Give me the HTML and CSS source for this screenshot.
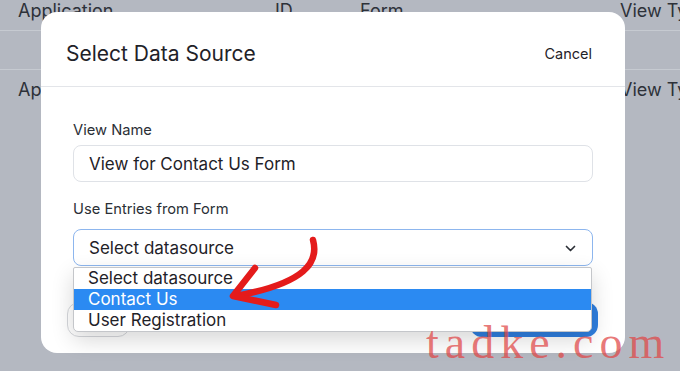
FILE: index.html
```html
<!DOCTYPE html>
<html lang="en">
<head>
    <meta charset="UTF-8">
    <meta name="viewport" content="width=device-width, initial-scale=1.0">
    <title>Select Data Source</title>
    <link rel="stylesheet" href="styles.css">
</head>
<body>
    <!-- Tabel di belakang modal -->
    <div class="table">
        <div class="row head">
            <span>Application</span>
            <span>ID</span>
            <span>Form</span>
            <span>View Type</span>
        </div>
        <div class="row empty"></div>
        <div class="row">
            <span>Application</span>
            <span></span>
            <span></span>
            <span>View Type</span>
        </div>
    </div>

    <!-- Modal -->
    <div class="modal">
        <div class="modal-head">
            <h2>Select Data Source</h2>
            <button class="cancel">Cancel</button>
        </div>
        <div class="modal-body">
            <label for="view-name">View Name</label>
            <input type="text" id="view-name" value="View for Contact Us Form">
            <label>Use Entries from Form</label>
            <div class="select-wrap">
                <div class="select">
                    <span>Select datasource</span>
                    <svg class="chevron" width="11" height="7" viewBox="0 0 11 7">
                        <path d="M1.5 1.5 L5.5 5.5 L9.5 1.5" fill="none" stroke="#2b2f36" stroke-width="1.7" stroke-linecap="round" stroke-linejoin="round"/>
                    </svg>
                </div>
                <ul class="options">
                    <li>Select datasource</li>
                    <li class="active">Contact Us</li>
                    <li>User Registration</li>
                </ul>
            </div>
        </div>
        <div class="modal-foot">
            <button class="btn-back">Back</button>
            <button class="btn-next">Next</button>
        </div>
    </div>

    <!-- Panah merah -->
    <svg class="arrow" width="680" height="371" viewBox="0 0 680 371">
        <path d="M313 240 C319 262 306 283 236 296" fill="none" stroke="#e41b1b" stroke-width="6.5" stroke-linecap="round"/>
        <path d="M255 268 L233 296 L276 305" fill="none" stroke="#e41b1b" stroke-width="6.5" stroke-linecap="round" stroke-linejoin="round"/>
    </svg>

    <div class="watermark">tadke.com</div>
</body>
</html>
```

FILE: styles.css
```css
body {
    margin: 0;
    width: 680px;
    height: 371px;
    overflow: hidden;
    background-color: #b4b8c1;
    font-family: Inter, "Noto Sans", sans-serif;
    color: #23262d;
}
.table {
    color: #2d3139;
    font-size: 18px;
}
.row {
    display: grid;
    grid-template-columns: 257px 85px 260px 1fr;
    padding-left: 18px;
    line-height: 24px;
    border-bottom: 1px solid #c6cad1;
    white-space: nowrap;
}
.row.head {
    height: 31px;
    margin-top: -1px;
}
.row.empty {
    height: 38px;
}
.row:last-child {
    padding-top: 8px;
    height: 36px;
    border-bottom: none;
}
.modal {
    position: absolute;
    left: 41px;
    top: 12px;
    width: 584px;
    background-color: #ffffff;
    border-radius: 16px;
    padding-bottom: 16px;
}
.modal-head {
    box-sizing: border-box;
    display: flex;
    justify-content: space-between;
    align-items: center;
    height: 75px;
    padding: 9px 33px 0 25px;
    border-bottom: 1px solid #e3e5e9;
}
.modal-head h2 {
    margin: 0;
    font-size: 21px;
    font-weight: 400;
    color: #1f2228;
}
.cancel {
    border: none;
    background: none;
    padding: 0;
    font-family: inherit;
    font-size: 14.5px;
    color: #1f2228;
}
.modal-body {
    padding: 34px 32px 0;
}
label {
    display: block;
    font-size: 14.7px;
    line-height: 18px;
    color: #2b2f36;
    margin-bottom: 6px;
}
input[type="text"] {
    display: block;
    box-sizing: border-box;
    width: 100%;
    height: 37px;
    margin: 0 0 18px;
    padding: 0 15px;
    border: 1px solid #dfe2e7;
    border-radius: 8px;
    font-family: inherit;
    font-size: 17px;
    color: #1f2228;
}
.modal-body label + input + label {
    margin-bottom: 11px;
}
.select-wrap {
    position: relative;
}
.select {
    box-sizing: border-box;
    height: 37px;
    display: flex;
    align-items: center;
    justify-content: space-between;
    padding: 0 16px 0 15px;
    border: 1px solid #8db6ee;
    border-radius: 8px;
    font-size: 17px;
    color: #1f2228;
}
.chevron {
    margin-top: 2px;
}
.options {
    position: absolute;
    left: 0;
    right: 1px;
    top: 100%;
    margin: 1px 0 0;
    padding: 0;
    list-style: none;
    background-color: #ffffff;
    border: 1px solid #c4c6ca;
    border-radius: 2px 2px 5px 5px;
    box-shadow: 0 8px 22px rgba(0, 0, 0, 0.16);
    z-index: 2;
}
.options li {
    height: 21px;
    line-height: 21px;
    padding-left: 14px;
    font-size: 17px;
    color: #1f2228;
}
.options li.active {
    background-color: #2b8af2;
    color: #ffffff;
}
.modal-foot {
    display: flex;
    justify-content: space-between;
    margin-top: 36px;
    padding: 0 27px 0 26px;
}
.modal-foot button {
    height: 35px;
    border-radius: 12px;
    font-family: inherit;
    font-size: 15px;
}
.btn-back {
    width: 63px;
    background: #ffffff;
    border: 1px solid #d6d8dc;
    color: #2b2f36;
}
.btn-next {
    width: 128px;
    background: #2f7fe0;
    border: none;
    color: #ffffff;
}
.arrow {
    position: absolute;
    left: 0;
    top: 0;
    z-index: 3;
    pointer-events: none;
}
.watermark {
    position: absolute;
    left: 426px;
    top: 320px;
    font-family: "Liberation Serif", serif;
    font-size: 46px;
    line-height: 46px;
    letter-spacing: 6px;
    color: rgba(224, 70, 70, 0.72);
    z-index: 4;
}
```
